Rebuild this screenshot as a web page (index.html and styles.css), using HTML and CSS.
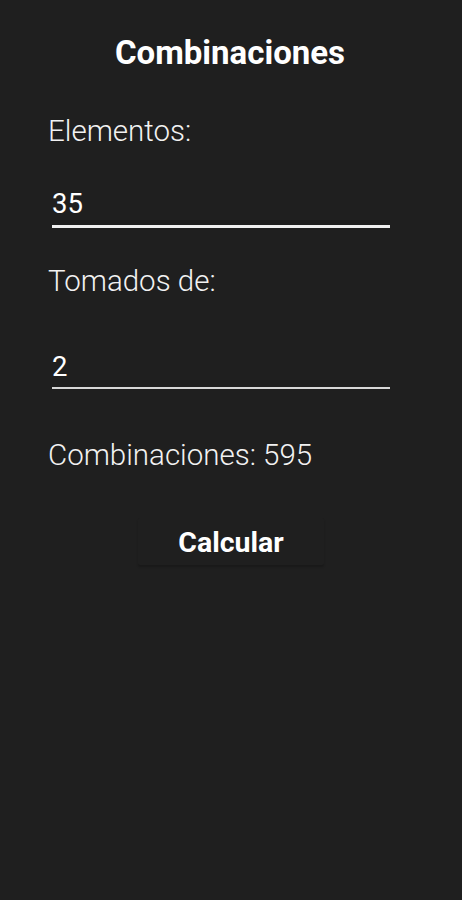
FILE: index.html
```html
<!DOCTYPE html>
<html lang="es">
<head>
<meta charset="utf-8">
<title>Combinaciones</title>
<link rel="stylesheet" href="styles.css">
</head>
<body>
<main class="screen">
  <h1 class="title">Combinaciones</h1>
  <label class="label label-first" for="elementos">Elementos:</label>
  <div class="field field-focused"><input id="elementos" class="input" type="text" value="35"></div>
  <label class="label label-second" for="tomados">Tomados de:</label>
  <div class="field field-plain"><input id="tomados" class="input" type="text" value="2"></div>
  <p class="result">Combinaciones: 595</p>
  <div class="actions"><button class="button" type="button">Calcular</button></div>
</main>
</body>
</html>
```
FILE: styles.css
```css
html, body {
  margin: 0;
  padding: 0;
  background: #1f1f1f;
}
body {
  font-family: Roboto, "Noto Sans", sans-serif;
  color: #ffffff;
  min-height: 900px;
}
.screen {
  display: flex;
  flex-direction: column;
  padding: 33px 72px 0 48px;
}
.title {
  margin: 0;
  font-size: 33px;
  font-weight: 700;
  line-height: normal;
  text-align: center;
  color: #ffffff;
  padding-left: 22px;
}
.label {
  font-size: 29.5px;
  font-weight: 300;
  line-height: normal;
  color: #f2f2f2;
}
.label-first { margin-top: 42px; }
.label-second { margin-top: 36px; }
.field {
  margin-left: 4px;
  display: flex;
}
.field-focused {
  margin-top: 39px;
  border-bottom: 3px solid #f0f0f0;
  padding-bottom: 5px;
}
.field-plain {
  margin-top: 52px;
  border-bottom: 2px solid #d8d8d8;
  padding-bottom: 4px;
}
.input {
  flex: 1;
  min-width: 0;
  background: transparent;
  border: 0;
  outline: none;
  padding: 0;
  margin: 0;
  font-family: Roboto, "Noto Sans", sans-serif;
  font-size: 27.5px;
  font-weight: 400;
  line-height: normal;
  color: #ffffff;
}
.result {
  margin: 49px 0 0;
  font-size: 29.5px;
  font-weight: 300;
  line-height: normal;
  color: #f2f2f2;
}
.actions {
  display: flex;
  justify-content: center;
  margin-top: 46px;
  padding-left: 24px;
}
.button {
  width: 186px;
  height: 47px;
  padding: 1px 0 0;
  border: 0;
  border-radius: 2px;
  background: #1f1f1f;
  box-shadow: 0 2px 2px rgba(0, 0, 0, 0.2);
  font-family: Roboto, "Noto Sans", sans-serif;
  font-size: 28.5px;
  font-weight: 700;
  color: #ffffff;
  align-self: flex-start;
}
```
